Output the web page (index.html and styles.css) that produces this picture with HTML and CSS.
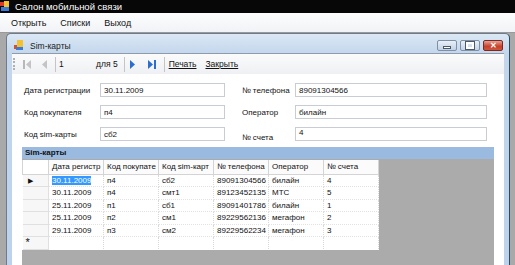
FILE: index.html
```html
<!DOCTYPE html>
<html lang="ru">
<head>
    <meta charset="UTF-8">
    <title>Салон мобильной связи</title>
    <link rel="stylesheet" href="styles.css">
</head>
<body>
    <div class="app">
        <div class="titlebar">
            <svg class="appicon" width="10" height="11" viewBox="0 0 10 11">
                <rect x="0" y="1" width="4" height="4" fill="#d83a2a"/>
                <rect x="4" y="0" width="5" height="6" fill="#f2c230"/>
                <rect x="1" y="6" width="8" height="4" fill="#3a7ad8"/>
            </svg>
            <span>Салон мобильной связи</span>
        </div>
        <div class="menubar">
            <span>Открыть</span>
            <span>Списки</span>
            <span>Выход</span>
        </div>
        <div class="mdi">
            <div class="child">
                <div class="child-title">
                    <svg class="formicon" width="10" height="11" viewBox="0 0 10 11">
                        <rect x="0" y="5" width="4" height="4" fill="#d8502a"/>
                        <rect x="3" y="0" width="6" height="7" fill="#f2c230"/>
                        <rect x="2" y="7" width="7" height="3" fill="#3a7ad8"/>
                    </svg>
                    <span class="child-name">Sim-карты</span>
                    <div class="wbtns">
                        <div class="wbtn"><span class="min-glyph"></span></div>
                        <div class="wbtn"><span class="max-glyph"></span></div>
                        <div class="wbtn close">&#x2715;</div>
                    </div>
                </div>
                <div class="client">
                    <div class="toolbar">
                        <span class="grip"></span>
                        <svg class="nav" width="9" height="9" viewBox="0 0 9 9">
                            <rect x="0" y="0" width="2" height="9" fill="#b8b8b8"/>
                            <path d="M8 0 L3 4.5 L8 9 Z" fill="#c4c4c4"/>
                        </svg>
                        <svg class="nav prev" width="6" height="9" viewBox="0 0 6 9">
                            <path d="M6 0 L1 4.5 L6 9 Z" fill="#c4c4c4"/>
                        </svg>
                        <span class="sep s1"></span>
                        <span class="pos">1</span>
                        <span class="count">для 5</span>
                        <span class="sep s2"></span>
                        <svg class="nav next" width="6" height="9" viewBox="0 0 6 9">
                            <path d="M0 0 L5 4.5 L0 9 Z" fill="#2a6fd0"/>
                        </svg>
                        <svg class="nav last" width="9" height="9" viewBox="0 0 9 9">
                            <path d="M0 0 L5 4.5 L0 9 Z" fill="#2a6fd0"/>
                            <rect x="6" y="0" width="2" height="9" fill="#2a6fd0"/>
                        </svg>
                        <span class="sep s3"></span>
                        <span class="link">Печать</span>
                        <span class="link">Закрыть</span>
                    </div>
                    <div class="fields">
                        <div class="field">
                            <label>Дата регистрации</label>
                            <div class="box">30.11.2009</div>
                        </div>
                        <div class="field right">
                            <label>№ телефона</label>
                            <div class="box wide">89091304566</div>
                        </div>
                        <div class="field">
                            <label>Код покупателя</label>
                            <div class="box">п4</div>
                        </div>
                        <div class="field right">
                            <label>Оператор</label>
                            <div class="box wide">билайн</div>
                        </div>
                        <div class="field">
                            <label>Код sim-карты</label>
                            <div class="box">сб2</div>
                        </div>
                        <div class="field right last">
                            <label>№ счета</label>
                            <div class="box wide top">4</div>
                        </div>
                    </div>
                    <div class="panel">
                        <div class="panel-head">Sim-карты</div>
                        <table class="grid">
                            <tr class="head">
                                <th class="rh"></th>
                                <th>Дата регистр</th>
                                <th>Код покупате</th>
                                <th>Код sim-карт</th>
                                <th>№ телефона</th>
                                <th>Оператор</th>
                                <th>№ счета</th>
                            </tr>
                            <tr>
                                <td class="rh"><span class="cur">&#9654;</span></td>
                                <td><span class="sel">30.11.2009</span></td>
                                <td>п4</td><td>сб2</td><td>89091304566</td><td>билайн</td><td>4</td>
                            </tr>
                            <tr>
                                <td class="rh"></td>
                                <td>30.11.2009</td><td>п4</td><td>смт1</td><td>89123452135</td><td>МТС</td><td>5</td>
                            </tr>
                            <tr>
                                <td class="rh"></td>
                                <td>25.11.2009</td><td>п1</td><td>сб1</td><td>89091401786</td><td>билайн</td><td>1</td>
                            </tr>
                            <tr>
                                <td class="rh"></td>
                                <td>25.11.2009</td><td>п2</td><td>см1</td><td>89229562136</td><td>мегафон</td><td>2</td>
                            </tr>
                            <tr>
                                <td class="rh"></td>
                                <td>29.11.2009</td><td>п3</td><td>см2</td><td>89229562234</td><td>мегафон</td><td>3</td>
                            </tr>
                            <tr class="newrow">
                                <td class="rh">*</td>
                                <td></td><td></td><td></td><td></td><td></td><td></td>
                            </tr>
                        </table>
                    </div>
                </div>
            </div>
        </div>
    </div>
</body>
</html>
```

FILE: styles.css
```css
* {
    margin: 0;
    padding: 0;
    box-sizing: border-box;
}

body {
    width: 515px;
    height: 265px;
    overflow: hidden;
    font-family: "Liberation Sans", Arial, sans-serif;
    font-size: 8px;
    color: #111;
    background: #ababab;
}

.app {
    height: 265px;
    display: flex;
    flex-direction: column;
}

/* main window */
.titlebar {
    height: 13px;
    background: #070707;
    color: #fff;
    display: flex;
    align-items: center;
    font-size: 9.5px;
    flex-shrink: 0;
}

.appicon {
    margin-right: 5px;
}

.menubar {
    height: 20px;
    background: linear-gradient(#fdfdfd, #f1f3f6);
    border-bottom: 1px solid #9a9a9a;
    display: flex;
    align-items: center;
    gap: 14px;
    padding-left: 11px;
    font-size: 9px;
    flex-shrink: 0;
}

.mdi {
    flex: 1;
    background: #a9a9a9;
    padding: 0 5px 0 6px;
    overflow: hidden;
}

/* child form */
.child {
    width: 504px;
    height: 240px;
    border: 1px solid #6d7b8c;
    border-right-color: #2b4c5c;
    border-bottom: none;
    border-radius: 5px 5px 0 0;
    background: linear-gradient(#dbe8f5, #c3d6ec 20px, #bcd2ec);
    padding: 0 5px;
    display: flex;
    flex-direction: column;
}

.child-title {
    height: 19px;
    display: flex;
    align-items: center;
    padding: 4px 0 0 2px;
}

.formicon {
    margin-right: 6px;
}

.child-name {
    font-size: 8.5px;
    color: #1a1a1a;
}

.wbtns {
    margin-left: auto;
    margin-right: 1px;
    display: flex;
    gap: 3px;
}

.wbtn {
    width: 20px;
    height: 11px;
    border: 1px solid #7f8fa4;
    border-radius: 2px;
    background: linear-gradient(#e9f0f8, #c2d2e6);
    display: flex;
    align-items: center;
    justify-content: center;
}

.min-glyph {
    width: 8px;
    height: 3px;
    margin-top: 3px;
    background: #fff;
    border: 1px solid #4d5868;
}

.max-glyph {
    width: 8px;
    height: 7px;
    border: 2px solid #fff;
    outline: 1px solid #4d5868;
}

.wbtn.close {
    background: linear-gradient(#e8a196, #c7402b 60%, #d0553c);
    border-color: #7a2a20;
    color: #fff;
    font-size: 8px;
    font-weight: bold;
    line-height: 1;
}

.client {
    flex: 1;
    background: #fff;
    border-top: 1px solid #8d9bad;
    display: flex;
    flex-direction: column;
    overflow: hidden;
}

/* navigator */
.toolbar {
    height: 20px;
    display: flex;
    align-items: center;
    padding-left: 1px;
    background: linear-gradient(#fbfbfb, #eef0f3);
    flex-shrink: 0;
    font-size: 8.5px;
}

.grip {
    width: 2px;
    height: 12px;
    border-left: 2px dotted #b0b0b0;
    margin-right: 8px;
}

.nav.prev {
    margin-left: 9px;
}

.sep {
    width: 1px;
    height: 15px;
    background: #c5c5c5;
}

.sep.s1 {
    margin: 0 3px 0 8px;
}

.sep.s2 {
    margin: 0 5px 0 6px;
}

.sep.s3 {
    margin: 0 4px 0 7px;
}

.pos {
    width: 37px;
}

.nav.last {
    margin-left: 12px;
}

.link {
    text-decoration: underline;
    margin-right: 9px;
}

/* record fields */
.fields {
    display: grid;
    grid-template-columns: 218px 262px;
    row-gap: 8px;
    padding: 9px 0 0 12px;
}

.field {
    display: flex;
    align-items: center;
    height: 14px;
    white-space: nowrap;
}

.field label {
    width: 76px;
}

.field.right label {
    width: 53px;
}

.box {
    width: 125px;
    height: 14px;
    border: 1px solid #c8cdd3;
    padding-left: 3px;
    display: flex;
    align-items: center;
    color: #111;
}

.box.wide {
    width: 192px;
}

.box.top {
    align-items: flex-start;
}

.field.last label {
    margin-top: 6px;
}

/* grid panel */
.panel {
    margin: 6px 10px 0 10px;
    flex: 1;
    background: #ababab;
}

.panel-head {
    height: 12px;
    background: #9bbae0;
    font-weight: bold;
    padding-left: 3px;
    line-height: 12px;
}

.grid {
    border-collapse: collapse;
    background: #fff;
    margin-top: 1px;
    table-layout: fixed;
    width: 355px;
}

.grid th,
.grid td {
    height: 12.5px;
    padding: 0 0 0 3px;
    text-align: left;
    font-weight: normal;
    white-space: nowrap;
    overflow: hidden;
    border-right: 1px dotted #d8d8d8;
    border-bottom: 1px dotted #e2e2e2;
    width: 55px;
}

.grid .head th {
    height: 14px;
    border: 1px solid #d4d4d4;
    border-top: none;
    background: #fbfbfb;
}

.grid .rh {
    width: 26px;
    background: #f7f7f7;
    border: 1px solid #e0e0e0;
    border-left: none;
}

.grid .head .rh {
    background: #fff;
}

.cur {
    font-size: 7px;
    margin-left: 2px;
}

.sel {
    background: #3399ff;
    color: #fff;
}

.newrow td {
    border-bottom: none;
}

.newrow .rh {
    font-size: 11px;
    line-height: 1;
}
```
